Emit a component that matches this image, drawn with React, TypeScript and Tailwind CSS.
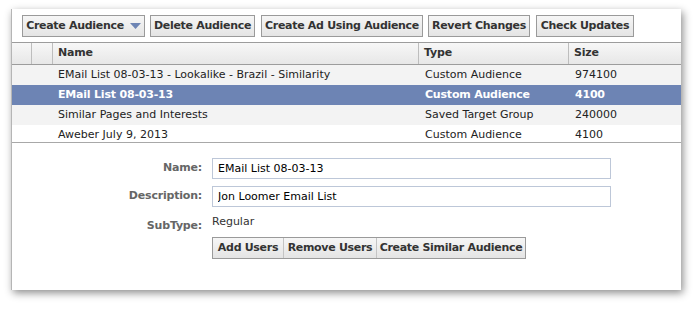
const rows = [
  { name: 'EMail List 08-03-13 - Lookalike - Brazil - Similarity', type: 'Custom Audience', size: '974100' },
  { name: 'EMail List 08-03-13', type: 'Custom Audience', size: '4100', selected: true },
  { name: 'Similar Pages and Interests', type: 'Saved Target Group', size: '240000' },
  { name: 'Aweber July 9, 2013', type: 'Custom Audience', size: '4100' },
];

function ToolButton({ w, children }: { w: string; children: React.ReactNode }) {
  return (
    <button
      className={`${w} h-[22px] shrink-0 flex items-center justify-center gap-[6px] whitespace-nowrap border border-[#9a9a9a] bg-gradient-to-b from-[#f6f6f6] to-[#e4e4e4] text-[11px] font-bold tracking-[-0.3px] text-[#333]`}
    >
      {children}
    </button>
  );
}

export default function App() {
  return (
    <div className="min-h-screen bg-white pt-[9px] pl-[11px] font-['DejaVu_Sans',sans-serif]">
      <div className="w-[670px] h-[281px] bg-white border-l border-[#b5b5b5] shadow-[2px_3px_8px_rgba(0,0,0,0.45)] flex flex-col">
        {/* Toolbar */}
        <div className="flex pl-[10px] pt-[6px]">
          <ToolButton w="w-[123px]">
            Create Audience
            <svg width="11" height="6" viewBox="0 0 11 6">
              <path d="M0 0 L11 0 L5.5 6 Z" fill="#6d84b4" />
            </svg>
          </ToolButton>
          <div className="w-[5px]" />
          <ToolButton w="w-[105px]">Delete Audience</ToolButton>
          <div className="w-[6px]" />
          <ToolButton w="w-[162px]">Create Ad Using Audience</ToolButton>
          <div className="w-[5px]" />
          <ToolButton w="w-[102px]">Revert Changes</ToolButton>
          <div className="w-[6px]" />
          <ToolButton w="w-[98px]">Check Updates</ToolButton>
        </div>

        {/* Table */}
        <div className="mt-[5px]">
          <div className="grid grid-cols-[20px_21px_366px_150px_1fr] h-[23px] border-y border-[#9c9c9c] bg-gradient-to-b from-[#f7f7f7] to-[#e7e7e7] text-[11px] font-bold tracking-[-0.2px] text-[#333]">
            <div className="border-r border-[#bdbdbd]" />
            <div className="border-r border-[#bdbdbd]" />
            <div className="border-r border-[#bdbdbd] pl-[5px] flex items-center">Name</div>
            <div className="border-r border-[#bdbdbd] pl-[5px] flex items-center">Type</div>
            <div className="pl-[5px] flex items-center">Size</div>
          </div>
          <div className="h-[78px] overflow-hidden border-b border-[#a8a8a8]">
            {rows.map((r, i) => (
              <div
                key={i}
                className={
                  r.selected
                    ? 'grid grid-cols-[41px_366px_150px_1fr] h-[20px] items-center bg-[#6d84b4] text-white font-bold tracking-[-0.2px] text-[11px]'
                    : i % 2 === 0
                      ? 'grid grid-cols-[41px_366px_150px_1fr] h-[20px] items-center bg-[#f3f3f3] text-[#222] text-[11px]'
                      : 'grid grid-cols-[41px_366px_150px_1fr] h-[20px] items-center bg-white text-[#222] text-[11px]'
                }
              >
                <div />
                <div className="pl-[5px] whitespace-nowrap">{r.name}</div>
                <div className="pl-[6px] whitespace-nowrap">{r.type}</div>
                <div className="pl-[6px]">{r.size}</div>
              </div>
            ))}
          </div>
        </div>

        {/* Detail form */}
        <div className="grid grid-cols-[190px_399px] gap-x-[10px] mt-[15px] text-[11px] items-center">
          <div className="text-right font-bold tracking-[-0.2px] text-[#666]">Name:</div>
          <input
            readOnly
            value="EMail List 08-03-13"
            className="h-[21px] border border-[#bdc7d8] px-[5px] text-[11px] text-black outline-none"
          />
          <div className="text-right font-bold tracking-[-0.2px] text-[#666] mt-[7px]">Description:</div>
          <input
            readOnly
            value="Jon Loomer Email List"
            className="h-[21px] mt-[7px] border border-[#bdc7d8] px-[5px] text-[11px] text-black outline-none"
          />
          <div className="text-right font-bold tracking-[-0.2px] text-[#666] mt-[6px] h-[20px] pt-[5px]">SubType:</div>
          <div className="mt-[6px] h-[20px] pt-[1px] text-[#333]">Regular</div>
          <div />
          <div className="flex mt-[4px]">
            <div className="flex border border-[#9a9a9a] bg-gradient-to-b from-[#f6f6f6] to-[#e4e4e4] text-[11px] font-bold tracking-[-0.3px] text-[#333] h-[22px] whitespace-nowrap">
              <button className="w-[71px] border-r border-[#c4c4c4]">Add Users</button>
              <button className="w-[93px] border-r border-[#c4c4c4]">Remove Users</button>
              <button className="w-[148px]">Create Similar Audience</button>
            </div>
          </div>
        </div>
      </div>
    </div>
  );
}
